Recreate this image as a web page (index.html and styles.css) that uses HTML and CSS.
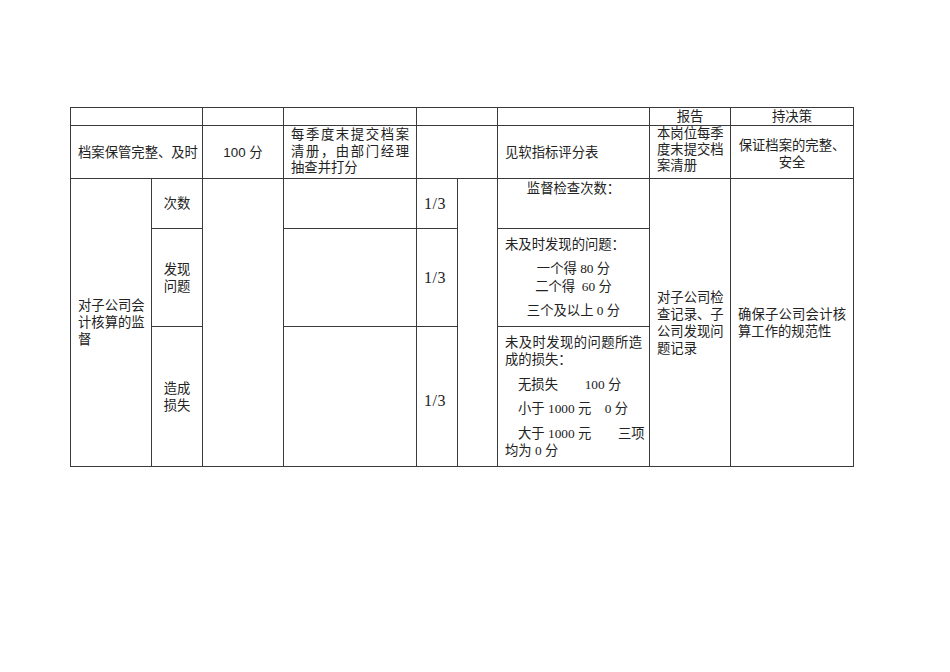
FILE: index.html
```html
<!DOCTYPE html>
<html lang="zh-CN">
<head>
<meta charset="utf-8">
<title>考核表</title>
<link rel="stylesheet" href="styles.css">
</head>
<body>
<table class="sheet">
  <colgroup>
    <col class="k1"><col class="k2"><col class="k3"><col class="k4"><col class="k5"><col class="k6"><col class="k7"><col class="k8"><col class="k9">
  </colgroup>
  <tr class="r1">
    <td colspan="2"></td>
    <td></td>
    <td></td>
    <td colspan="2"></td>
    <td></td>
    <td class="ctr">报告</td>
    <td class="ctr">持决策</td>
  </tr>
  <tr class="r2">
    <td colspan="2" class="ctr">档案保管完整、及时</td>
    <td class="ctr sans">100 分</td>
    <td class="tight"><span class="jl">每季度末提交档案</span><span class="jl">清册，由部门经理</span><span class="ln">抽查并打分</span></td>
    <td colspan="2"></td>
    <td>见软指标评分表</td>
    <td class="up"><span class="jl">本岗位每季</span><span class="jl">度末提交档</span><span class="ln">案清册</span></td>
    <td class="ctr dn">保证档案的完整、<br>安全</td>
  </tr>
  <tr class="r3">
    <td rowspan="3"><span class="jl">对子公司会</span><span class="jl">计核算的监</span><span class="ln">督</span></td>
    <td class="ctr">次数</td>
    <td rowspan="3"></td>
    <td></td>
    <td class="frac">1/3</td>
    <td rowspan="3"></td>
    <td class="ctr top">监督检查次数：</td>
    <td rowspan="3"><span class="jl">对子公司检</span><span class="jl">查记录、子</span><span class="jl">公司发现问</span><span class="ln">题记录</span></td>
    <td rowspan="3"><span class="jl">确保子公司会计核</span><span class="ln">算工作的规范性</span></td>
  </tr>
  <tr class="r4">
    <td class="ctr">发现<br>问题</td>
    <td></td>
    <td class="frac">1/3</td>
    <td>
      <p class="para">未及时发现的问题：</p>
      <p class="para ctr">一个得 80 分<br>二个得&nbsp;&nbsp;60 分</p>
      <p class="para ctr">三个及以上 0 分</p>
    </td>
  </tr>
  <tr class="r5">
    <td class="ctr">造成<br>损失</td>
    <td></td>
    <td class="frac low">1/3</td>
    <td>
      <p class="para"><span class="jl">未及时发现的问题所造</span><span class="ln">成的损失：</span></p>
      <p class="para ind">无损失　　100 分</p>
      <p class="para ind">小于 1000 元&nbsp;&nbsp;&nbsp; 0 分</p>
      <p class="para"><span class="jl ind">大于 1000 元　　三项</span><span class="ln">均为 0 分</span></p>
    </td>
  </tr>
</table>
</body>
</html>
```

FILE: styles.css
```css
html, body {
  margin: 0;
  padding: 0;
  background: #ffffff;
}

body {
  font-family: "Liberation Serif", "Noto Sans CJK SC", serif;
  font-size: 13.33px;
  color: #222222;
}

.sheet {
  border-collapse: collapse;
  table-layout: fixed;
  width: 784px;
  margin: 107px 0 0 70px;
}

.sheet col.k1 { width: 81px; }
.sheet col.k2 { width: 51px; }
.sheet col.k3 { width: 81px; }
.sheet col.k4 { width: 133px; }
.sheet col.k5 { width: 41px; }
.sheet col.k6 { width: 40px; }
.sheet col.k7 { width: 152px; }
.sheet col.k8 { width: 81px; }
.sheet col.k9 { width: 123px; }

.sheet td {
  border: 1px solid #3a3a3a;
  padding: 0 7px;
  vertical-align: middle;
  line-height: 17px;
  text-align: left;
  white-space: nowrap;
  overflow: hidden;
}

.r1 td { height: 17px; line-height: 16px; }
.r2 td { height: 52px; }
.r3 td { height: 49px; }
.r4 td { height: 97px; }
.r5 td { height: 139px; }

.sheet td.ctr { text-align: center; }
.sheet .r3 td.top { vertical-align: top; padding-top: 1px; height: 48px; }
.sheet .r2 td.tight { line-height: 16.5px; }
.sheet .r2 td.up { line-height: 16px; padding-bottom: 4px; height: 48px; }
.sheet .r2 td.dn { padding-top: 4px; height: 48px; }
.sheet .r5 td.low { padding-top: 8px; height: 131px; }

.sheet td.frac {
  font-size: 16px;
  letter-spacing: 0.5px;
}

.sans { font-family: "Liberation Sans", "Noto Sans CJK SC", sans-serif; }

.jl {
  display: block;
  text-align: justify;
  text-align-last: justify;
}

.ln {
  display: block;
}

.para {
  margin: 0;
  line-height: 17.5px;
}

.para + .para {
  margin-top: 7px;
}

.para.ctr { text-align: center; }

.ind { padding-left: 13px; }
```
